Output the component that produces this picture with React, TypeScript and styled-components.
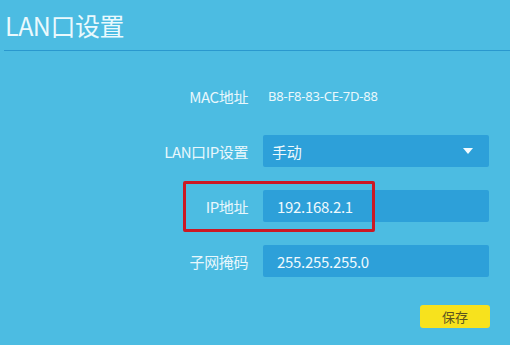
import React from "react";
import styled, { createGlobalStyle } from "styled-components";

const GlobalStyle = createGlobalStyle`
  html, body {
    margin: 0;
    padding: 0;
    background: #4cbce2;
  }
  body {
    font-family: "Noto Sans CJK SC", "Noto Sans", sans-serif;
  }
`;

const Page = styled.div`
  width: 510px;
  height: 345px;
  background: #4cbce2;
  overflow: hidden;
`;

const Header = styled.div`
  height: 50px;
  margin-left: 4px;
  border-bottom: 1px solid #2a98ce;
  display: flex;
  align-items: center;
`;

const Title = styled.h1`
  margin: 0;
  padding-left: 1px;
  font-size: 25px;
  font-weight: 400;
  color: #eaf9fd;
  line-height: 1;
  letter-spacing: -0.5px;
`;

const Form = styled.div`
  padding-top: 29px;
  display: flex;
  flex-direction: column;
  gap: 23px;
`;

const Row = styled.div`
  position: relative;
  display: grid;
  grid-template-columns: 248px 226px;
  column-gap: 15px;
  height: 32px;
  align-items: center;
`;

const Label = styled.div`
  text-align: right;
  font-size: 15px;
  color: #e8f7fc;
  letter-spacing: -0.4px;
`;

const PlainValue = styled.div`
  padding-left: 5px;
  font-size: 13px;
  color: #eaf8fc;
  font-family: "Noto Sans", "Noto Sans CJK SC", sans-serif;
  letter-spacing: -0.2px;
`;

const Field = styled.div<{ $pad: number }>`
  height: 32px;
  background: #2da0d9;
  border-radius: 2px;
  display: flex;
  align-items: center;
  justify-content: space-between;
  padding: 0 16px 0 ${(p) => p.$pad}px;
  box-sizing: border-box;
  font-size: 15px;
  color: #eef9fd;
  letter-spacing: -0.3px;
`;

const Arrow = styled.span`
  width: 0;
  height: 0;
  border-left: 5px solid transparent;
  border-right: 5px solid transparent;
  border-top: 6px solid #f2fbff;
`;

const Highlight = styled.div`
  position: absolute;
  left: 183px;
  top: -9px;
  width: 192px;
  height: 51px;
  border: 3px solid #cc1824;
  border-radius: 2px;
  box-sizing: border-box;
  pointer-events: none;
`;

const Actions = styled.div`
  display: flex;
  justify-content: flex-end;
  width: 490px;
  margin-top: 5px;
`;

const SaveButton = styled.button`
  width: 70px;
  height: 23px;
  border: none;
  border-radius: 3px;
  background: #f7e21d;
  color: #5b5520;
  font-family: "Noto Sans CJK SC", sans-serif;
  font-size: 13px;
  padding: 0;
`;

export default function App() {
  return (
    <Page>
      <GlobalStyle />
      <Header>
        <Title>LAN口设置</Title>
      </Header>
      <Form>
        <Row>
          <Label>MAC地址</Label>
          <PlainValue>B8-F8-83-CE-7D-88</PlainValue>
        </Row>
        <Row>
          <Label>LAN口IP设置</Label>
          <Field $pad={9}>
            <span>手动</span>
            <Arrow />
          </Field>
        </Row>
        <Row>
          <Label>IP地址</Label>
          <Field $pad={14}>
            <span>192.168.2.1</span>
          </Field>
          <Highlight />
        </Row>
        <Row>
          <Label>子网掩码</Label>
          <Field $pad={14}>
            <span>255.255.255.0</span>
          </Field>
        </Row>
        <Actions>
          <SaveButton>保存</SaveButton>
        </Actions>
      </Form>
    </Page>
  );
}
